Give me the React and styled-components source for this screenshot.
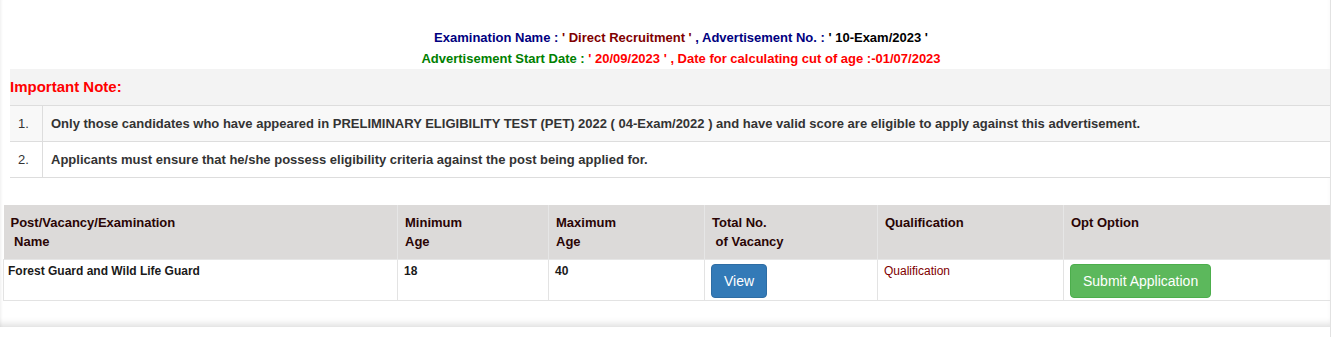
import React from "react";
import styled, { createGlobalStyle } from "styled-components";

const GlobalStyle = createGlobalStyle`
    body {
        margin: 0;
        background: #fff;
        font-family: "Liberation Sans", Arial, sans-serif;
        color: #333;
    }
`;

const Page = styled.div`
    min-height: 337px;
    border-right: 1px solid #e2e2e2;
`;

const Panel = styled.div`
    height: 327px;
    box-sizing: border-box;
    overflow: hidden;
    box-shadow: inset 0 -7px 7px -4px rgba(0, 0, 0, 0.13), inset 3px 0 3px -2px rgba(0, 0, 0, 0.05);
`;

const Heading = styled.div`
    padding: 27px 0 0 32px;
    text-align: center;
    font-size: 13px;
    font-weight: bold;
    line-height: 21px;
`;

const Part = styled.span`
    color: ${props => props.$color};
`;

const NoteBox = styled.div`
    margin-left: 10px;
    background: #f3f3f3;
`;

const NoteTitle = styled.div`
    color: #f00;
    font-size: 15px;
    font-weight: bold;
    line-height: 18px;
    padding: 9px 0;
`;

const NoteTable = styled.table`
    width: 100%;
    border-collapse: collapse;
    font-size: 13px;
    line-height: 19px;
`;

const NoteRow = styled.tr`
    background: ${props => props.$striped ? "#f8f8f8" : "#fff"};
`;

const NoteNum = styled.td`
    width: 16px;
    padding: 8px;
    border: 1px solid #ddd;
    border-left: 0;
    color: #333;
`;

const NoteText = styled.td`
    padding: 8px;
    border: 1px solid #ddd;
    border-right: 0;
    font-weight: bold;
    color: #333;
`;

const PostTable = styled.table`
    margin: 27px 0 0 3px;
    width: 1327px;
    border-collapse: collapse;
    table-layout: fixed;
`;

const Col = styled.col`
    width: ${props => props.$w}px;
`;

const HeadCell = styled.th`
    background: #dcdad9;
    border: 1px solid #e6e6e6;
    border-top: 0;
    padding: 8px 8px 8px 7px;
    text-align: left;
    vertical-align: top;
    font-size: 13px;
    line-height: 19px;
    font-weight: bold;
    color: #2a0505;
    &:first-child { border-left: 0; }
    &:last-child { border-right: 0; }
`;

const Cell = styled.td`
    border: 1px solid #e3e3e3;
    padding: 4px 5px 2px 6px;
    vertical-align: top;
    font-size: 12px;
    line-height: 14px;
    font-weight: ${props => props.$plain ? "normal" : "bold"};
    color: ${props => props.$plain ? "#800000" : "#1a1a1a"};
    &:first-child { padding-left: 4px; }
    &:last-child { border-right: 0; }
`;

const Button = styled.button`
    display: inline-block;
    vertical-align: top;
    height: 34px;
    padding: 6px 12px;
    border: 1px solid ${props => props.$border};
    border-radius: 4px;
    background: ${props => props.$bg};
    color: #fff;
    font-family: "Liberation Sans", Arial, sans-serif;
    font-size: 14px;
    line-height: 20px;
    cursor: pointer;
`;

const columns = [
    { w: 394, title: ["Post/Vacancy/Examination", "\u00a0Name"] },
    { w: 151, title: ["Minimum", "Age"] },
    { w: 156, title: ["Maximum", "Age"] },
    { w: 173, title: ["Total No.", "\u00a0of Vacancy"] },
    { w: 186, title: ["Qualification"] },
    { w: 267, title: ["Opt Option"] }
];

const notes = [
    "Only those candidates who have appeared in PRELIMINARY ELIGIBILITY TEST (PET) 2022 ( 04-Exam/2022 ) and have valid score are eligible to apply against this advertisement.",
    "Applicants must ensure that he/she possess eligibility criteria against the post being applied for."
];

export default function App() {
    return (
        <Page>
            <GlobalStyle />
            <Panel>
                <Heading>
                    <div>
                        <Part $color="#000080">Examination Name : </Part>
                        <Part $color="#800000">' Direct Recruitment '</Part>
                        <Part $color="#000080"> , Advertisement No. : </Part>
                        <Part $color="#000">' 10-Exam/2023 '</Part>
                    </div>
                    <div>
                        <Part $color="#008000">Advertisement Start Date : </Part>
                        <Part $color="#f00">' 20/09/2023 ' , Date for calculating cut of age :-01/07/2023</Part>
                    </div>
                </Heading>

                <NoteBox>
                    <NoteTitle>Important Note:</NoteTitle>
                    <NoteTable>
                        <tbody>
                            {notes.map((n, i) => (
                                <NoteRow key={i} $striped={i % 2 === 0}>
                                    <NoteNum>{i + 1}.</NoteNum>
                                    <NoteText>{n}</NoteText>
                                </NoteRow>
                            ))}
                        </tbody>
                    </NoteTable>
                </NoteBox>

                <PostTable>
                    <colgroup>
                        {columns.map(c => <Col key={c.title[0]} $w={c.w} />)}
                    </colgroup>
                    <thead>
                        <tr>
                            {columns.map(c => (
                                <HeadCell key={c.title[0]}>
                                    {c.title.map((t, i) => <div key={i}>{t}</div>)}
                                </HeadCell>
                            ))}
                        </tr>
                    </thead>
                    <tbody>
                        <tr>
                            <Cell>Forest Guard and Wild Life Guard</Cell>
                            <Cell>18</Cell>
                            <Cell>40</Cell>
                            <Cell><Button $bg="#337ab7" $border="#2e6da4">View</Button></Cell>
                            <Cell $plain>Qualification</Cell>
                            <Cell><Button $bg="#5cb85c" $border="#4cae4c">Submit Application</Button></Cell>
                        </tr>
                    </tbody>
                </PostTable>
            </Panel>
        </Page>
    );
}
